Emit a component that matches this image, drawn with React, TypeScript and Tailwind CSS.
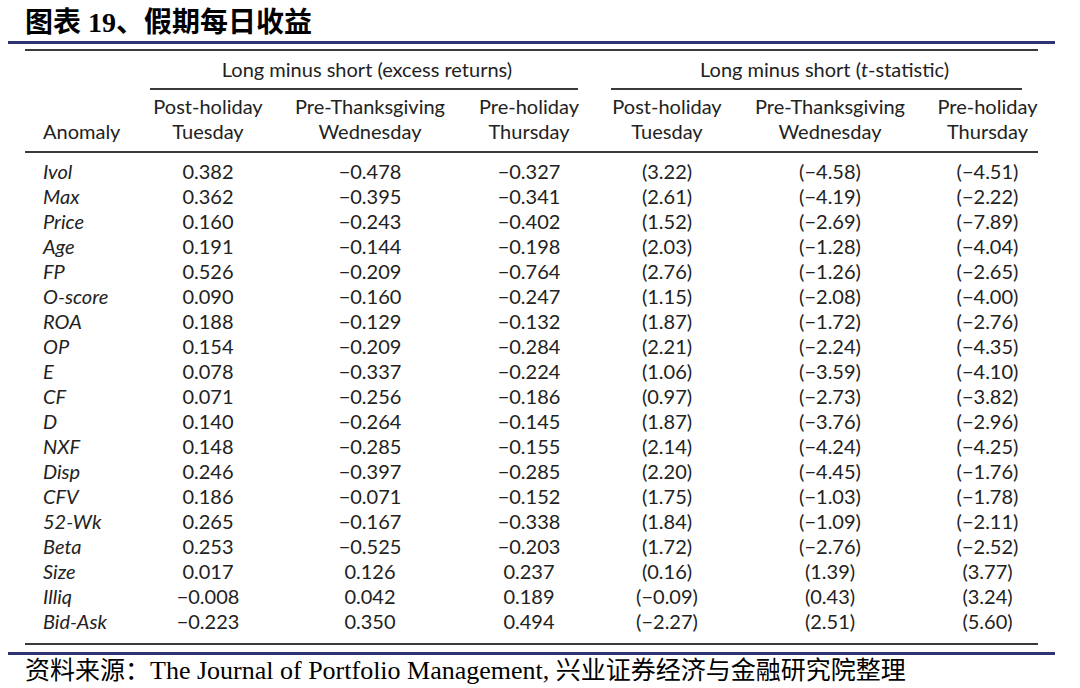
const rows: [string, string, string, string, string, string, string][] = [
  ['Ivol', '0.382', '−0.478', '−0.327', '(3.22)', '(−4.58)', '(−4.51)'],
  ['Max', '0.362', '−0.395', '−0.341', '(2.61)', '(−4.19)', '(−2.22)'],
  ['Price', '0.160', '−0.243', '−0.402', '(1.52)', '(−2.69)', '(−7.89)'],
  ['Age', '0.191', '−0.144', '−0.198', '(2.03)', '(−1.28)', '(−4.04)'],
  ['FP', '0.526', '−0.209', '−0.764', '(2.76)', '(−1.26)', '(−2.65)'],
  ['O-score', '0.090', '−0.160', '−0.247', '(1.15)', '(−2.08)', '(−4.00)'],
  ['ROA', '0.188', '−0.129', '−0.132', '(1.87)', '(−1.72)', '(−2.76)'],
  ['OP', '0.154', '−0.209', '−0.284', '(2.21)', '(−2.24)', '(−4.35)'],
  ['E', '0.078', '−0.337', '−0.224', '(1.06)', '(−3.59)', '(−4.10)'],
  ['CF', '0.071', '−0.256', '−0.186', '(0.97)', '(−2.73)', '(−3.82)'],
  ['D', '0.140', '−0.264', '−0.145', '(1.87)', '(−3.76)', '(−2.96)'],
  ['NXF', '0.148', '−0.285', '−0.155', '(2.14)', '(−4.24)', '(−4.25)'],
  ['Disp', '0.246', '−0.397', '−0.285', '(2.20)', '(−4.45)', '(−1.76)'],
  ['CFV', '0.186', '−0.071', '−0.152', '(1.75)', '(−1.03)', '(−1.78)'],
  ['52-Wk', '0.265', '−0.167', '−0.338', '(1.84)', '(−1.09)', '(−2.11)'],
  ['Beta', '0.253', '−0.525', '−0.203', '(1.72)', '(−2.76)', '(−2.52)'],
  ['Size', '0.017', '0.126', '0.237', '(0.16)', '(1.39)', '(3.77)'],
  ['Illiq', '−0.008', '0.042', '0.189', '(−0.09)', '(0.43)', '(3.24)'],
  ['Bid-Ask', '−0.223', '0.350', '0.494', '(−2.27)', '(2.51)', '(5.60)'],
];

const heads = [
  ['Post-holiday', 'Tuesday'],
  ['Pre-Thanksgiving', 'Wednesday'],
  ['Pre-holiday', 'Thursday'],
];

const grid = 'grid grid-cols-[125px_116px_208px_110px_27px_112px_214px_101px]';

export default function App() {
  return (
    <div className="w-[1080px] h-[688px] bg-white text-[#222] overflow-hidden">
      {/* title */}
      <div className="h-[41px] pl-[25px] pt-[6px] font-['Liberation_Serif','Noto_Sans_CJK_SC',serif] font-bold text-[28px] leading-[34px] text-black">
        图表 19、假期每日收益
      </div>
      <div className="ml-[8px] w-[1047px] h-[3px] bg-[#2d3373]" />

      {/* table */}
      <div className="ml-[25px] w-[1013px] mt-[5px] font-['Lato',sans-serif] text-[20px]">
        <div className="h-[2px] bg-[#3a3a3a]" />
        <div className={grid}>
          <div />
          <div className="col-span-3 flex flex-col">
            <div className="h-[37px] leading-[37px] text-center">Long minus short (excess returns)</div>
            <div className="h-[2px] bg-[#3a3a3a] mr-[6px]" />
          </div>
          <div />
          <div className="col-span-3 flex flex-col">
            <div className="h-[37px] leading-[37px] text-center">
              Long minus short (<i>t</i>-statistic)
            </div>
            <div className="h-[2px] bg-[#3a3a3a] mr-[16px]" />
          </div>
        </div>
        <div className={`${grid} pt-[4px] pb-[7px] leading-[25px]`}>
          <div className="flex items-end pl-[18px]">Anomaly</div>
          {heads.map((h, i) => (
            <div key={'a' + i} className="text-center">
              {h[0]}
              <br />
              {h[1]}
            </div>
          ))}
          <div />
          {heads.map((h, i) => (
            <div key={'b' + i} className="text-center">
              {h[0]}
              <br />
              {h[1]}
            </div>
          ))}
        </div>
        <div className="h-[2px] bg-[#3a3a3a]" />
        <div className="pt-[6px] pb-[9px]">
          {rows.map((r) => (
            <div key={r[0]} className={`${grid} h-[25px] leading-[25px]`}>
              <div className="pl-[18px] italic">{r[0]}</div>
              <div className="text-center">{r[1]}</div>
              <div className="text-center">{r[2]}</div>
              <div className="text-center">{r[3]}</div>
              <div />
              <div className="text-center">{r[4]}</div>
              <div className="text-center">{r[5]}</div>
              <div className="text-center">{r[6]}</div>
            </div>
          ))}
        </div>
        <div className="h-[2px] bg-[#3a3a3a]" />
      </div>
      <div className="ml-[8px] w-[1047px] h-[3px] bg-[#2d3373] mt-[7px]" />

      {/* source */}
      <div className="pl-[25px] pt-[2px] whitespace-nowrap font-['Liberation_Serif','Noto_Sans_CJK_SC',serif] text-[25px] leading-[28px] text-black">
        资料来源：<span className="text-[26px]">The Journal of Portfolio Management, </span>兴业证券经济与金融研究院整理
      </div>
    </div>
  );
}
